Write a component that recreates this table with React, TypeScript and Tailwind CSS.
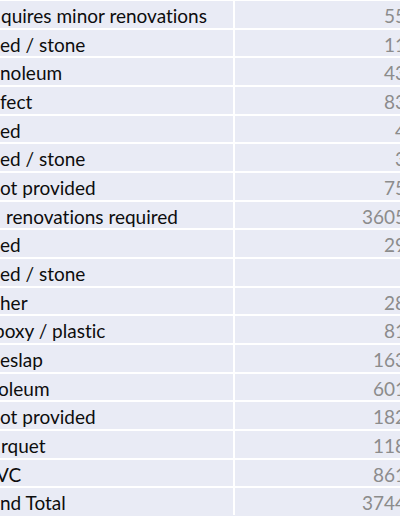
import React from "react";

type Row = { label: string; cls: string; num: string };

const rows: Row[] = [
  { label: "quires minor renovations", cls: "ml-[1px]", num: "559" },
  { label: "ed / stone", cls: "ml-0", num: "117" },
  { label: "noleum", cls: "ml-0", num: "436" },
  { label: "fect", cls: "ml-0", num: "834" },
  { label: "ed", cls: "ml-0", num: "42" },
  { label: "ed / stone", cls: "ml-0", num: "37" },
  { label: "ot provided", cls: "ml-0", num: "759" },
  { label: "renovations required", cls: "ml-[6px]", num: "36059" },
  { label: "ed", cls: "ml-0", num: "294" },
  { label: "ed / stone", cls: "ml-0", num: "8" },
  { label: "her", cls: "ml-0", num: "285" },
  { label: "poxy / plastic", cls: "-ml-[6px]", num: "817" },
  { label: "eslap", cls: "ml-0", num: "1636" },
  { label: "oleum", cls: "-ml-[2px]", num: "6012" },
  { label: "ot provided", cls: "ml-0", num: "1829" },
  { label: "rquet", cls: "ml-[1px]", num: "1188" },
  { label: "VC", cls: "-ml-[4px]", num: "8613" },
  { label: "nd Total", cls: "ml-0", num: "37443" },
];

export default function App() {
  return (
    <div className="w-[400px] h-[516px] overflow-hidden bg-[#e9ebf5] font-['Lato',sans-serif] text-[19px] [font-variant-ligatures:none]">
      <div className="-mt-[1px] flex w-[418px] flex-col">
        {rows.map((r, i) => (
          <div key={i} className="flex h-[28.67px] shrink-0 border-t-2 border-white">
            <div className="w-[233px] shrink-0 overflow-hidden whitespace-nowrap pt-[5px] leading-[20px] text-[#0d0d0d]">
              <span className={"inline-block " + r.cls}>{r.label}</span>
            </div>
            <div className="flex-1 border-l-2 border-white pr-[1px] pt-[5px] text-right leading-[20px] text-[#8c8c8c]">
              {r.num}
            </div>
          </div>
        ))}
      </div>
    </div>
  );
}
